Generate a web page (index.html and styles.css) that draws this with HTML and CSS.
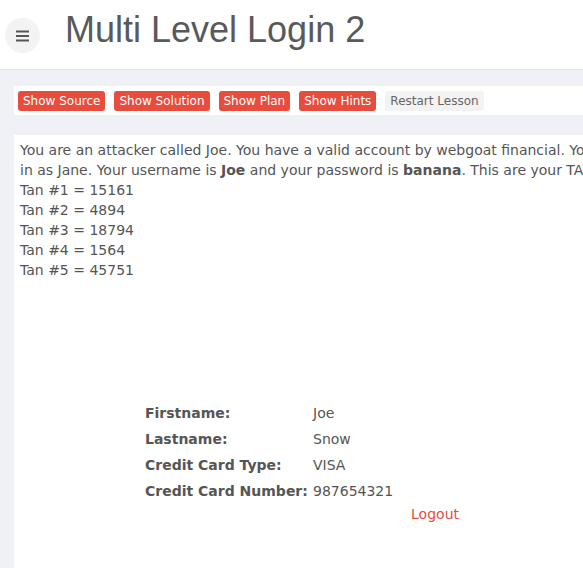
FILE: index.html
```html
<!DOCTYPE html>
<html>
<head>
<meta charset="utf-8">
<link rel="stylesheet" href="styles.css">
</head>
<body>
<header class="top">
  <button class="menu" aria-label="menu">
    <svg width="14" height="12" viewBox="0 0 14 12"><rect x="0" y="0.5" width="13" height="2" fill="#555"/><rect x="0" y="5" width="13" height="2" fill="#555"/><rect x="0" y="9.5" width="13" height="2" fill="#555"/></svg>
  </button>
  <h1 class="title">Multi Level Login 2</h1>
</header>
<main class="main">
  <div class="toolbar">
    <span class="btn red">Show Source</span>
    <span class="btn red">Show Solution</span>
    <span class="btn red">Show Plan</span>
    <span class="btn red">Show Hints</span>
    <span class="btn grey">Restart Lesson</span>
  </div>
  <section class="content">
    <div class="line">You are an attacker called Joe. You have a valid account by webgoat financial. Your goal is to log</div>
    <div class="line">in as Jane. Your username is <b>Joe</b> and your password is <b>banana</b>. This are your TANS:</div>
    <div class="line">Tan #1 = 15161</div>
    <div class="line">Tan #2 = 4894</div>
    <div class="line">Tan #3 = 18794</div>
    <div class="line">Tan #4 = 1564</div>
    <div class="line">Tan #5 = 45751</div>
    <div class="info">
      <div class="grid">
        <span class="lbl">Firstname:</span><span>Joe</span>
        <span class="lbl">Lastname:</span><span>Snow</span>
        <span class="lbl">Credit Card Type:</span><span>VISA</span>
        <span class="lbl">Credit Card Number:</span><span>987654321</span>
      </div>
      <div class="logout">Logout</div>
    </div>
  </section>
</main>
</body>
</html>
```
FILE: styles.css
```css
html, body {
  margin: 0;
  padding: 0;
  overflow: hidden;
}
body {
  width: 583px;
  height: 568px;
  background: #f0f1f6;
  font-family: "DejaVu Sans", sans-serif;
  color: #555;
}
.top {
  height: 70px;
  background: #fff;
  border-bottom: 1px solid #e4e6ec;
  display: flex;
  align-items: flex-start;
  box-sizing: border-box;
}
.menu {
  margin: 18px 0 0 5px;
  width: 35px;
  height: 35px;
  border-radius: 50%;
  border: none;
  background: #f3f3f3;
  padding: 0;
  display: flex;
  align-items: center;
  justify-content: center;
}
.title {
  margin: 8px 0 0 25px;
  font-family: "Liberation Sans", Arial, sans-serif;
  font-weight: normal;
  font-size: 36px;
  line-height: 44px;
  color: #58595b;
}
.main {
  padding: 16px 0 0 14px;
}
.toolbar {
  width: 700px;
  background: #fff;
  height: 29px;
  display: flex;
  align-items: center;
  gap: 9px;
  padding-left: 4px;
  box-sizing: border-box;
}
.btn {
  font-size: 12px;
  line-height: 20px;
  height: 20px;
  padding: 0 5px;
  border-radius: 3px;
  white-space: nowrap;
}
.red {
  background: #e74c3c;
  color: #fff;
}
.grey {
  background: #f3f3f3;
  color: #666;
}
.content {
  margin-top: 20px;
  width: 800px;
  height: 500px;
  background: #fff;
  padding: 5px 6px;
  box-sizing: border-box;
  font-size: 14px;
  line-height: 20px;
}
.line {
  white-space: nowrap;
}
.info {
  margin: 123px 0 0 125px;
  width: 314px;
}
.grid {
  display: grid;
  grid-template-columns: 168px auto;
  row-gap: 6px;
  font-size: 14px;
  line-height: 20px;
}
.lbl {
  font-weight: bold;
}
.logout {
  text-align: right;
  color: #e74c3c;
  margin-top: 3px;
}
```
